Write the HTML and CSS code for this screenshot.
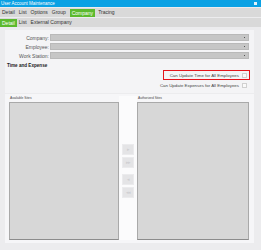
FILE: index.html
```html
<!DOCTYPE html>
<html lang="en">
<head>
    <meta charset="UTF-8">
    <title>User Account Maintenance</title>
    <link rel="stylesheet" href="styles.css">
</head>
<body>
    <div class="window">
        <div class="titlebar">
            <span class="title">User Account Maintenance</span>
            <span class="help"></span>
        </div>
        <div class="menu">
            <span>Detail</span>
            <span>List</span>
            <span>Options</span>
            <span>Group</span>
            <span class="current">Company</span>
            <span>Tracing</span>
        </div>
        <div class="menu sub">
            <span class="current">Detail</span>
            <span>List</span>
            <span>External Company</span>
        </div>

        <div class="panel top">
            <div class="row"><label>Company:</label><div class="select"></div></div>
            <div class="row"><label>Employee:</label><div class="select"></div></div>
            <div class="row"><label>Work Station:</label><div class="select"></div></div>
            <div class="section">Time and Expense</div>
            <div class="checks">
                <div class="check marked">Can Update Time for All Employees <i></i></div>
                <div class="check">Can Update Expenses for All Employees <i></i></div>
            </div>
        </div>

        <div class="panel sites">
            <div class="list">
                <div class="cap">Available Sites</div>
                <div class="box"></div>
            </div>
            <div class="mover">
                <div class="btn">&#9656;</div>
                <div class="btn">&#9656;&#9656;</div>
                <div class="btn gap">&#9666;</div>
                <div class="btn">&#9666;&#9666;</div>
            </div>
            <div class="list">
                <div class="cap">Authorized Sites</div>
                <div class="box"></div>
            </div>
        </div>
    </div>
</body>
</html>
```

FILE: styles.css
```css
* {
    margin: 0;
    padding: 0;
    box-sizing: border-box;
}
body {
    width: 261px;
    height: 250px;
    overflow: hidden;
    background-color: #ececee;
    font-family: "Liberation Sans", Arial, sans-serif;
    font-size: 5px;
    color: #333;
}
.window {
    width: 261px;
    height: 250px;
    display: flex;
    flex-direction: column;
}
.titlebar {
    height: 7px;
    background-color: #0aa1e4;
    color: #fff;
    font-size: 4.5px;
    display: flex;
    align-items: center;
    justify-content: space-between;
    padding: 0 4px 0 1px;
}
.help {
    width: 3px;
    height: 3px;
    background-color: #dff2fb;
}
.menu {
    height: 9px;
    margin-top: 1px;
    background-color: #d9d9d9;
    display: flex;
    align-items: center;
    gap: 4px;
    padding-left: 2px;
}
.menu span {
    line-height: 7px;
}
.menu .current {
    background-color: #5cba2e;
    color: #fff;
    padding: 0 2px;
    line-height: 8px;
    margin-right: -1px;
}
.sub {
    padding-left: 0;
    gap: 3px;
}
.sub span:last-child {
    margin-left: 1px;
}
.panel {
    margin: 0 7px 0 5px;
    background-color: #f4f4f6;
}
.top {
    margin-top: 3px;
    height: 63px;
    padding: 3px 0 0;
}
.row {
    display: flex;
    align-items: center;
    height: 9px;
}
.row label {
    width: 45px;
    text-align: right;
    padding-right: 1px;
    color: #555;
}
.select {
    width: 199px;
    height: 7px;
    background-color: #c6c6c6;
    border: 1px solid #b9b9b9;
    position: relative;
}
.select::after {
    content: "";
    position: absolute;
    right: 3px;
    top: 2px;
    width: 1px;
    height: 1px;
    background-color: #555;
}
.section {
    font-weight: bold;
    font-size: 4.6px;
    margin: 3px 0 0 2px;
    line-height: 6px;
    color: #222;
}
.checks {
    display: flex;
    flex-direction: column;
    align-items: flex-end;
    padding-right: 7px;
    margin-top: 1px;
    font-size: 4.4px;
}
.check {
    display: flex;
    align-items: center;
    gap: 3px;
    height: 6px;
    color: #444;
}
.check i {
    width: 5px;
    height: 5px;
    border: 1px solid #d0d0d0;
    background-color: #fafafa;
}
.check.marked {
    height: 10px;
    margin: 0 -3px 2px 0;
    padding: 0 2px 0 6px;
    border: 1px solid #e4141b;
}
.sites {
    margin-top: 1px;
    height: 149px;
    display: flex;
    padding: 2px 5px 3px 4px;
    background-color: #f6f6f8;
}
.list {
    display: flex;
    flex-direction: column;
}
.list:first-child {
    width: 110px;
}
.list:last-child {
    width: 112px;
}
.cap {
    height: 5px;
    line-height: 5px;
    padding-left: 1px;
    margin-bottom: 1px;
    font-size: 3.3px;
    color: #444;
}
.box {
    flex: 1;
    background-color: #d7d7d7;
    border: 1px solid #a9a9a9;
    border-bottom-color: #8c8c8c;
}
.mover {
    width: 18px;
    display: flex;
    flex-direction: column;
    align-items: center;
    padding-top: 48px;
    gap: 2px;
    background-color: #fbfbfc;
}
.btn {
    width: 12px;
    height: 11px;
    background-color: #e4e4e6;
    border: 1px solid #ebebed;
    color: #cfcfd2;
    font-size: 5px;
    line-height: 9px;
    text-align: center;
    letter-spacing: -1px;
}
.btn.gap {
    margin-top: 4px;
}
```
